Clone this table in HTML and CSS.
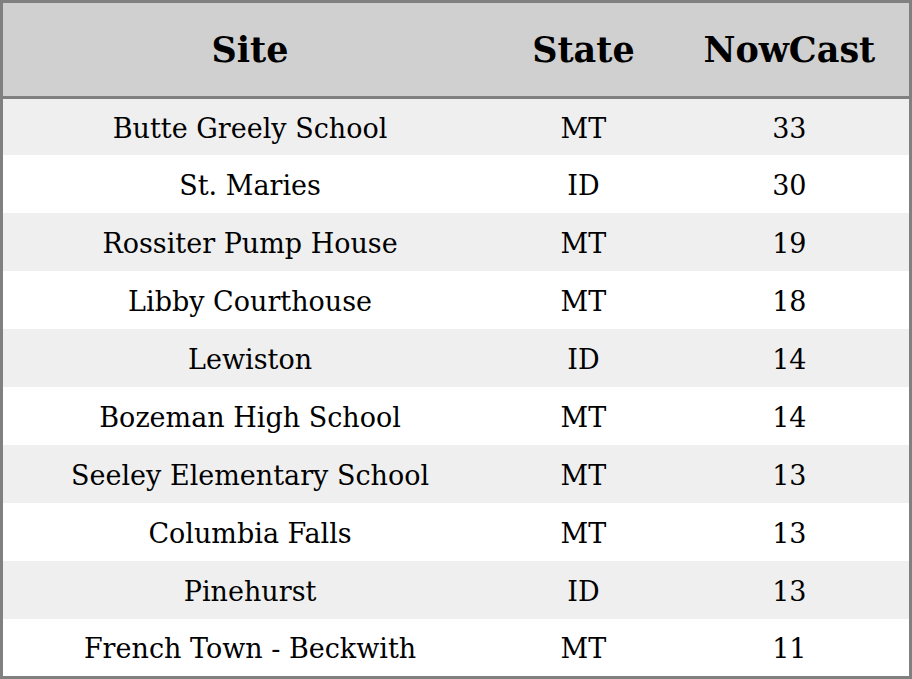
FILE: index.html
```html
<!DOCTYPE html>
<html>
<head>
<meta charset="utf-8">
<link rel="stylesheet" href="styles.css">
</head>
<body>
<table class="grid">
  <colgroup>
    <col class="c-site">
    <col class="c-state">
    <col class="c-now">
  </colgroup>
  <thead>
    <tr><th>Site</th><th>State</th><th>NowCast</th></tr>
  </thead>
  <tbody>
    <tr><td>Butte Greely School</td><td>MT</td><td>33</td></tr>
    <tr><td>St. Maries</td><td>ID</td><td>30</td></tr>
    <tr><td>Rossiter Pump House</td><td>MT</td><td>19</td></tr>
    <tr><td>Libby Courthouse</td><td>MT</td><td>18</td></tr>
    <tr><td>Lewiston</td><td>ID</td><td>14</td></tr>
    <tr><td>Bozeman High School</td><td>MT</td><td>14</td></tr>
    <tr><td>Seeley Elementary School</td><td>MT</td><td>13</td></tr>
    <tr><td>Columbia Falls</td><td>MT</td><td>13</td></tr>
    <tr><td>Pinehurst</td><td>ID</td><td>13</td></tr>
    <tr><td>French Town - Beckwith</td><td>MT</td><td>11</td></tr>
  </tbody>
</table>
</body>
</html>
```
FILE: styles.css
```css
html, body {
  margin: 0;
  padding: 0;
  background: #ffffff;
}
.grid {
  width: 912px;
  height: 679px;
  border-collapse: collapse;
  border: 3px solid #808080;
  font-family: "DejaVu Serif", serif;
  color: #000;
  table-layout: fixed;
}
.c-site { width: 494px; }
.c-state { width: 172px; }
.c-now { width: 240px; }
.grid th {
  background: #d0d0d0;
  height: 93px;
  padding: 0;
  font-size: 35px;
  font-weight: bold;
  text-align: center;
  border-bottom: 3px solid #808080;
}
.grid td {
  height: 56px;
  padding: 2px 0 0;
  font-size: 27px;
  text-align: center;
}
.grid tbody tr:first-child td {
  height: 54px;
}
.grid tbody tr:last-child td {
  height: 55px;
}
.grid tbody tr:nth-child(odd) td {
  background: #efefef;
}
```
